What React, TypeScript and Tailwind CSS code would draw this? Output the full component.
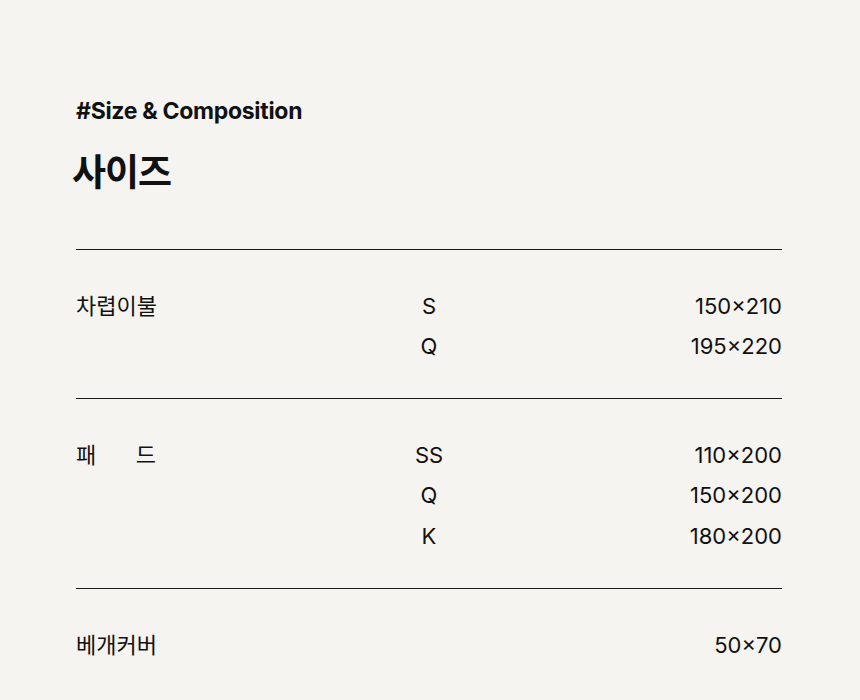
const SECTIONS = [
  {
    label: "차렵이불",
    rows: [
      { size: "S", value: "150×210" },
      { size: "Q", value: "195×220" },
    ],
  },
  {
    label: "패드",
    spread: true,
    rows: [
      { size: "SS", value: "110×200" },
      { size: "Q", value: "150×200" },
      { size: "K", value: "180×200" },
    ],
  },
  {
    label: "베개커버",
    rows: [{ size: "", value: "50×70" }],
  },
];

export default function App() {
  return (
    <div
      className="min-h-[700px] bg-[#f5f4f0] pl-[76px] pr-[78px] pt-[96px] text-[#111111]"
      style={{ fontFamily: 'Inter, "Noto Sans CJK KR", sans-serif' }}
    >
      <p className="text-[23px] font-bold leading-[30px] tracking-[-0.3px]">#Size &amp; Composition</p>
      <h1 className="mt-[22px] -ml-[4px] text-[37px] font-bold leading-[50px] tracking-[-1px]">사이즈</h1>

      <div className="mt-[51px]">
        {SECTIONS.map((s) => (
          <div key={s.label} className="border-t border-[#1a1a1a] pt-[36px] pb-[31.5px]">
            {s.rows.map((r, i) => (
              <div key={i} className="grid grid-cols-3 text-[22px] leading-[40.33px]">
                <span>
                  {i === 0 &&
                    (s.spread ? (
                      <span className="flex w-[80px] justify-between">
                        <span>패</span>
                        <span>드</span>
                      </span>
                    ) : (
                      s.label
                    ))}
                </span>
                <span className="text-center">{r.size}</span>
                <span className="text-right">{r.value}</span>
              </div>
            ))}
          </div>
        ))}
      </div>
    </div>
  );
}
